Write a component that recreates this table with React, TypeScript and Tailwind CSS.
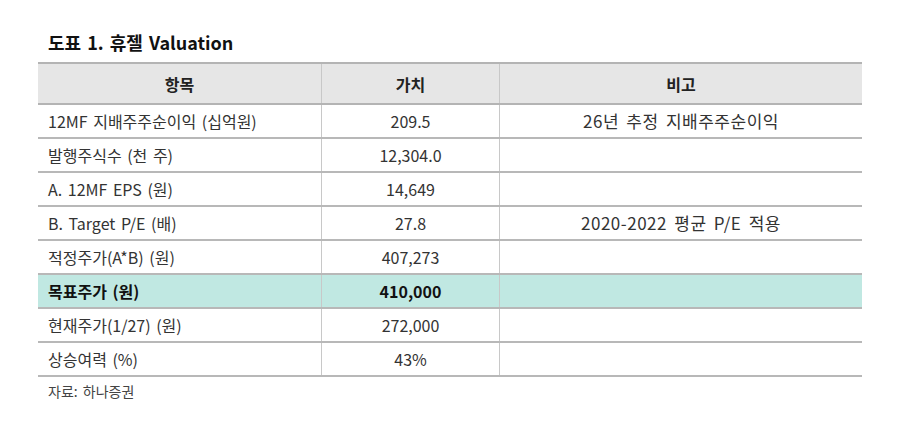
import React from "react";

const rows: { label: string; value: string; note: string; highlight?: boolean }[] = [
  { label: "12MF 지배주주순이익 (십억원)", value: "209.5", note: "26년 추정 지배주주순이익" },
  { label: "발행주식수 (천 주)", value: "12,304.0", note: "" },
  { label: "A. 12MF EPS (원)", value: "14,649", note: "" },
  { label: "B. Target P/E (배)", value: "27.8", note: "2020-2022 평균 P/E 적용" },
  { label: "적정주가(A*B) (원)", value: "407,273", note: "" },
  { label: "목표주가 (원)", value: "410,000", note: "", highlight: true },
  { label: "현재주가(1/27) (원)", value: "272,000", note: "" },
  { label: "상승여력 (%)", value: "43%", note: "" },
];

export default function App() {
  return (
    <div
      className="w-[900px] h-[435px] bg-white text-[#333] pt-[30px]"
      style={{ fontFamily: '"Noto Sans CJK KR", "Noto Sans", sans-serif' }}
    >
      <h1 className="ml-[48px] text-[18px] font-bold text-[#111] leading-[24px] mb-[8px] [word-spacing:2px]">
        도표 1. 휴젤 Valuation
      </h1>
      <div className="ml-[38px] w-[824px] border-t-2 border-[#b4b4b4]">
        <div className="grid grid-cols-[284px_178px_362px] h-[41px] bg-[#e6e6e6] border-b-2 border-[#b4b4b4] text-[16px] font-bold text-[#222]">
          <div className="flex items-center justify-center border-r border-[#c8c8c8]">항목</div>
          <div className="flex items-center justify-center border-r border-[#c8c8c8]">가치</div>
          <div className="flex items-center justify-center">비고</div>
        </div>
        {rows.map((r) => (
          <div
            key={r.label}
            className={`grid grid-cols-[284px_178px_362px] h-[34px] border-b-2 border-[#b8b8b8] text-[16px] ${
              r.highlight ? "bg-[#c0e8e2] font-bold text-[#111]" : ""
            }`}
          >
            <div className="flex items-center pl-[10px] border-r border-[#c8c8c8] whitespace-nowrap [word-spacing:2px]">
              {r.label}
            </div>
            <div className="flex items-center justify-center border-r border-[#c8c8c8]">{r.value}</div>
            <div className="flex items-center justify-center whitespace-nowrap text-[17px] tracking-[0.5px] [word-spacing:3px]">
              {r.note}
            </div>
          </div>
        ))}
      </div>
      <div className="ml-[48px] mt-[4px] text-[14px] text-[#444] [word-spacing:2px]">자료: 하나증권</div>
    </div>
  );
}
